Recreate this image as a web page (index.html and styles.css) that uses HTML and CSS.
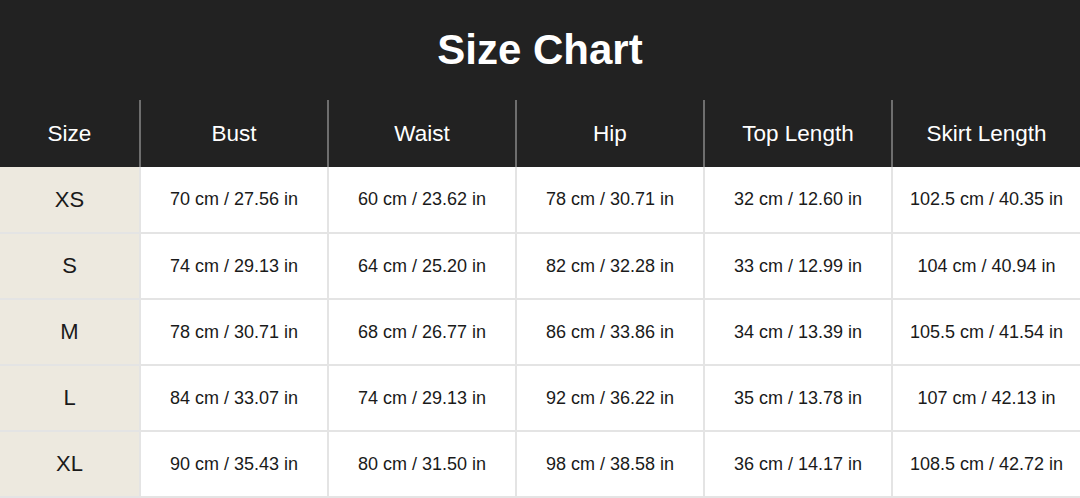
FILE: index.html
```html
<!DOCTYPE html>
<html>
<head>
<meta charset="utf-8">
<link rel="stylesheet" href="styles.css">
</head>
<body>
<div class="chart">
  <h1 class="title">Size Chart</h1>
  <table class="sizes">
    <colgroup>
      <col class="c-size"><col class="c-m"><col class="c-m"><col class="c-m"><col class="c-m"><col class="c-m">
    </colgroup>
    <thead>
      <tr><th>Size</th><th>Bust</th><th>Waist</th><th>Hip</th><th>Top Length</th><th>Skirt Length</th></tr>
    </thead>
    <tbody>
      <tr class="first"><td class="sz">XS</td><td>70 cm / 27.56 in</td><td>60 cm / 23.62 in</td><td>78 cm / 30.71 in</td><td>32 cm / 12.60 in</td><td>102.5 cm / 40.35 in</td></tr>
      <tr><td class="sz">S</td><td>74 cm / 29.13 in</td><td>64 cm / 25.20 in</td><td>82 cm / 32.28 in</td><td>33 cm / 12.99 in</td><td>104 cm / 40.94 in</td></tr>
      <tr><td class="sz">M</td><td>78 cm / 30.71 in</td><td>68 cm / 26.77 in</td><td>86 cm / 33.86 in</td><td>34 cm / 13.39 in</td><td>105.5 cm / 41.54 in</td></tr>
      <tr><td class="sz">L</td><td>84 cm / 33.07 in</td><td>74 cm / 29.13 in</td><td>92 cm / 36.22 in</td><td>35 cm / 13.78 in</td><td>107 cm / 42.13 in</td></tr>
      <tr><td class="sz">XL</td><td>90 cm / 35.43 in</td><td>80 cm / 31.50 in</td><td>98 cm / 38.58 in</td><td>36 cm / 14.17 in</td><td>108.5 cm / 42.72 in</td></tr>
    </tbody>
  </table>
</div>
</body>
</html>
```
FILE: styles.css
```css
html, body {
  margin: 0;
  padding: 0;
  background: #ffffff;
}
body {
  font-family: "Liberation Sans", Arial, sans-serif;
  color: #1a1a1a;
}
.chart {
  width: 1080px;
}
.title {
  margin: 0;
  height: 100px;
  background: #222222;
  color: #ffffff;
  font-size: 42px;
  font-weight: 700;
  display: flex;
  align-items: center;
  justify-content: center;
}
.sizes {
  width: 1080px;
  table-layout: fixed;
  border-collapse: collapse;
}
.c-size { width: 140px; }
.c-m { width: 188px; }
.sizes th {
  background: #222222;
  color: #ffffff;
  font-weight: 400;
  font-size: 22.5px;
  height: 67px;
  padding: 0;
  border-left: 2px solid #6e6e6e;
}
.sizes th:first-child { border-left: none; }
.sizes td {
  height: 64px;
  padding: 0;
  text-align: center;
  font-size: 18px;
  color: #1a1a1a;
  border-left: 2px solid #e4e4e4;
  border-bottom: 2px solid #e4e4e4;
}
.sizes tr.first td {
  height: 65px;
}
.sizes td.sz {
  border-left: none;
  background: #ede9df;
  font-size: 22px;
}
```
